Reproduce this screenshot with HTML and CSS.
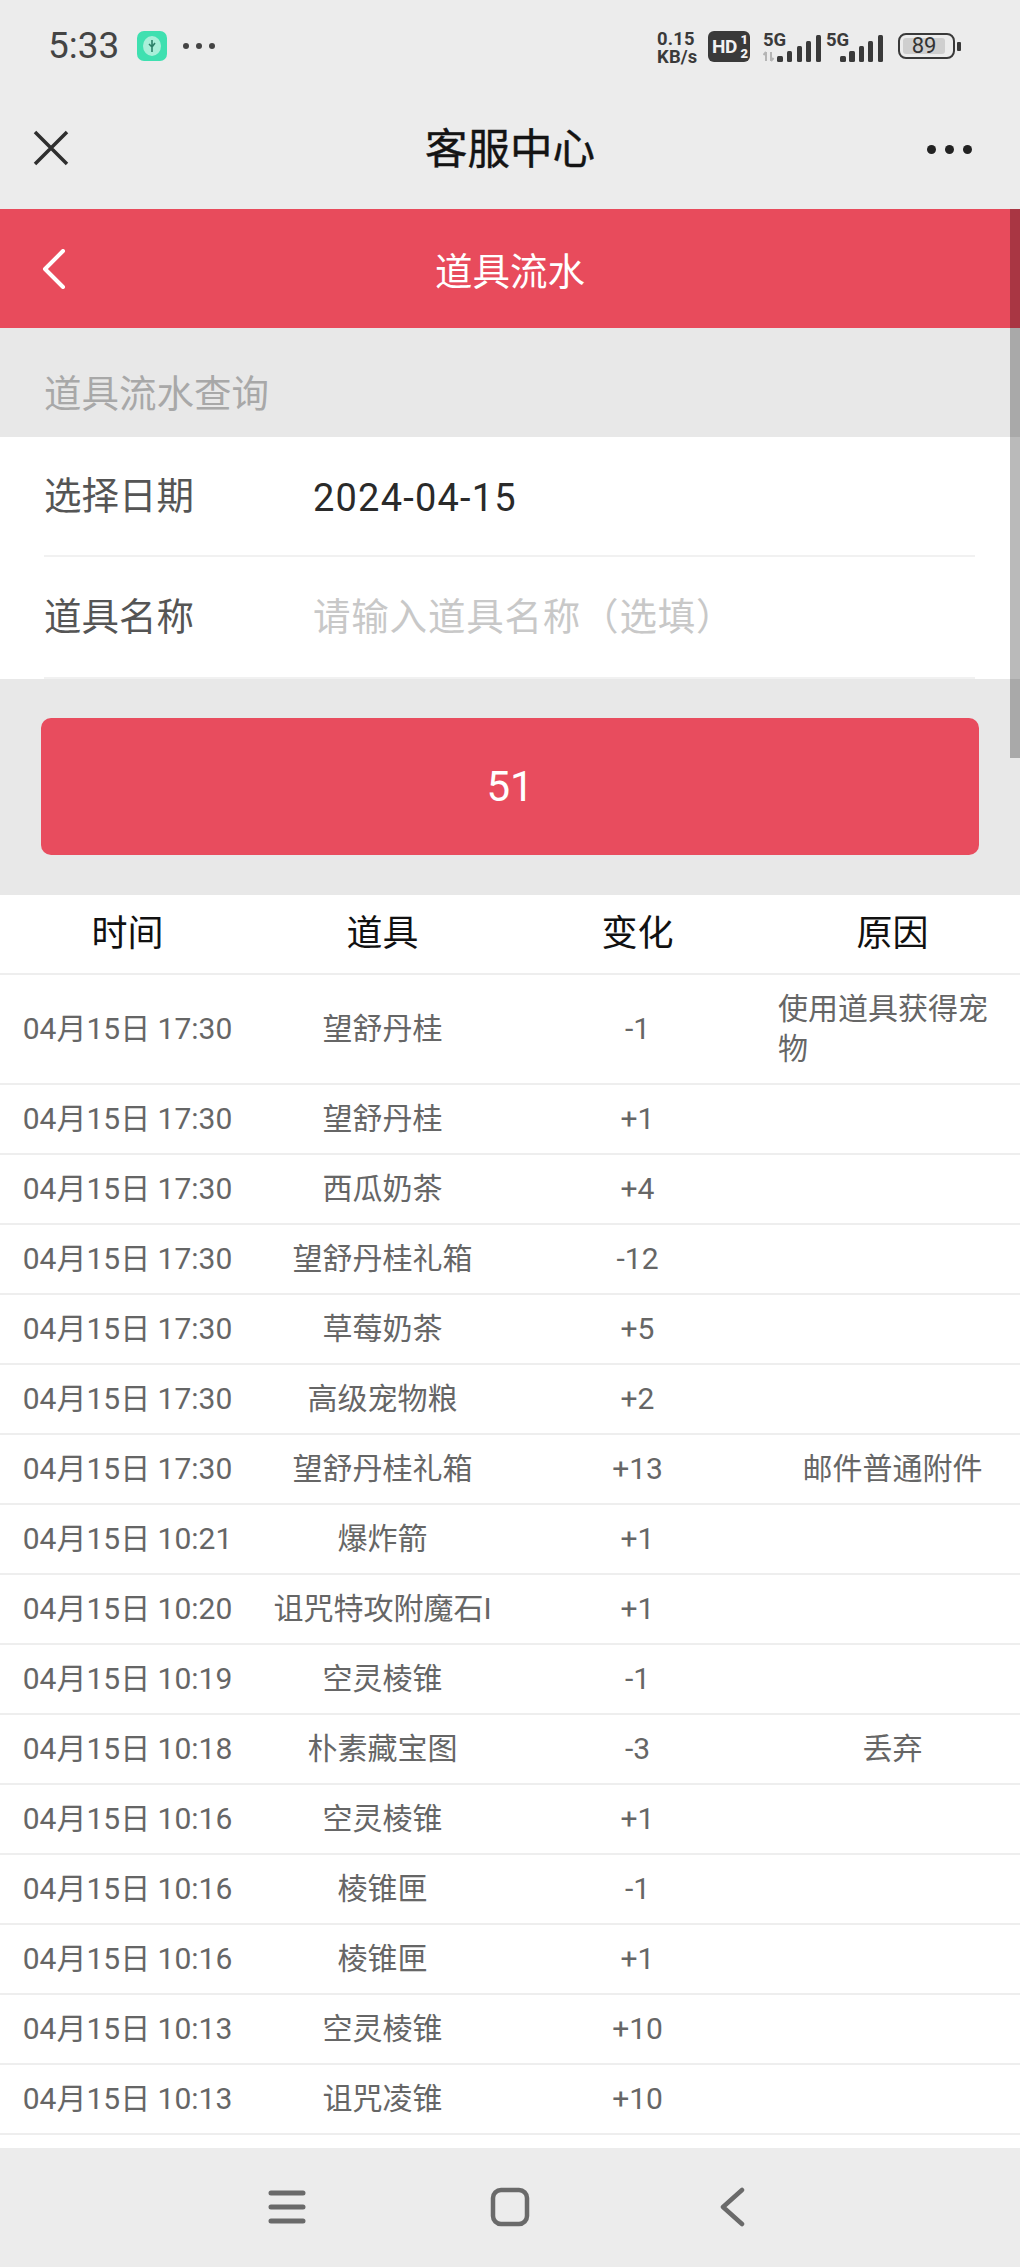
FILE: index.html
```html
<!DOCTYPE html>
<html lang="zh-CN">
<head>
    <meta charset="UTF-8">
    <meta name="viewport" content="width=device-width, initial-scale=1.0">
    <title>道具流水</title>
    <link rel="stylesheet" href="styles.css">
</head>
<body>
<div class="statusbar">
    <div class="status-left">
        <span class="clock">5:33</span>
        <span class="app-icon">
            <svg width="20" height="22" viewBox="0 0 20 22"><ellipse cx="10" cy="11" rx="9" ry="10" fill="#a9efd9"/><path d="M10 5v12M7 9l3 3M13 8l-3 4" stroke="#2c7f68" stroke-width="1.6" fill="none"/></svg>
        </span>
        <span class="more-dots"><i></i><i></i><i></i></span>
    </div>
    <div class="status-right">
        <div class="net"><span>0.15</span><span>KB/s</span></div>
        <div class="hd"><span class="hd-text">HD</span><span class="hd-sim"><b>1</b><b>2</b></span></div>
        <svg class="signal first" width="62" height="36" viewBox="0 -6 62 36">
            <text x="0" y="14" class="sig-text">5G</text>
            <path d="M3 20v9M0.5 23l2.5-3M8 29v-9M10.500 26l-2.500 3" stroke="#b5b5b5" stroke-width="2" fill="none"/>
            <rect x="14" y="24" width="6" height="6" rx="1.500"/><rect x="24" y="19" width="5" height="11" rx="1.500"/><rect x="34" y="14" width="5" height="16" rx="1.500"/><rect x="43" y="9" width="5" height="21" rx="1.500"/><rect x="53" y="3" width="5" height="27" rx="1.500"/>
        </svg>
        <svg class="signal" width="58" height="36" viewBox="0 -6 58 36">
            <text x="0" y="14" class="sig-text">5G</text>
            <rect x="14" y="24" width="6" height="6" rx="1.500"/><rect x="23" y="19" width="6" height="11" rx="1.500"/><rect x="33" y="14" width="5" height="16" rx="1.500"/><rect x="42" y="9" width="5" height="21" rx="1.500"/><rect x="52" y="3" width="5" height="27" rx="1.500"/>
        </svg>
        <div class="battery">
            <div class="battery-box"><span class="battery-level">89</span></div>
            <span class="battery-nub"></span>
        </div>
    </div>
</div>

<div class="titlebar">
    <svg class="close-icon" width="36" height="36" viewBox="0 0 36 36"><path d="M2 2l32 32M34 2L2 34" stroke="#2f2f2f" stroke-width="3.500" fill="none"/></svg>
    <div class="titlebar-name">客服中心</div>
    <div class="titlebar-more"><i></i><i></i><i></i></div>
</div>

<div class="main">
    <div class="page-head">
        <svg class="back-icon" width="24" height="40" viewBox="0 0 24 40"><path d="M21 2L3 20l18 18" stroke="#fff" stroke-width="4" fill="none" stroke-linecap="round" stroke-linejoin="round"/></svg>
        <div class="page-head-title">道具流水</div>
    </div>

    <div class="section-title">道具流水查询</div>
    <div class="form">
        <div class="form-row">
            <span class="form-label">选择日期</span>
            <span class="form-value">2024-04-15</span>
        </div>
        <div class="form-row">
            <span class="form-label">道具名称</span>
            <span class="form-placeholder">请输入道具名称（选填）</span>
        </div>
    </div>

    <div class="btn-wrap">
        <div class="btn">51</div>
    </div>

    <div class="table">
        <div class="row head">
            <div class="cell">时间</div><div class="cell">道具</div><div class="cell">变化</div><div class="cell">原因</div>
        </div>
        <div class="row">
            <div class="cell">04月15日 17:30</div><div class="cell">望舒丹桂</div><div class="cell">-1</div><div class="cell">使用道具获得宠物</div>
        </div>
        <div class="row">
            <div class="cell">04月15日 17:30</div><div class="cell">望舒丹桂</div><div class="cell">+1</div><div class="cell"></div>
        </div>
        <div class="row">
            <div class="cell">04月15日 17:30</div><div class="cell">西瓜奶茶</div><div class="cell">+4</div><div class="cell"></div>
        </div>
        <div class="row">
            <div class="cell">04月15日 17:30</div><div class="cell">望舒丹桂礼箱</div><div class="cell">-12</div><div class="cell"></div>
        </div>
        <div class="row">
            <div class="cell">04月15日 17:30</div><div class="cell">草莓奶茶</div><div class="cell">+5</div><div class="cell"></div>
        </div>
        <div class="row">
            <div class="cell">04月15日 17:30</div><div class="cell">高级宠物粮</div><div class="cell">+2</div><div class="cell"></div>
        </div>
        <div class="row">
            <div class="cell">04月15日 17:30</div><div class="cell">望舒丹桂礼箱</div><div class="cell">+13</div><div class="cell">邮件普通附件</div>
        </div>
        <div class="row">
            <div class="cell">04月15日 10:21</div><div class="cell">爆炸箭</div><div class="cell">+1</div><div class="cell"></div>
        </div>
        <div class="row">
            <div class="cell">04月15日 10:20</div><div class="cell">诅咒特攻附魔石I</div><div class="cell">+1</div><div class="cell"></div>
        </div>
        <div class="row">
            <div class="cell">04月15日 10:19</div><div class="cell">空灵棱锥</div><div class="cell">-1</div><div class="cell"></div>
        </div>
        <div class="row">
            <div class="cell">04月15日 10:18</div><div class="cell">朴素藏宝图</div><div class="cell">-3</div><div class="cell">丢弃</div>
        </div>
        <div class="row">
            <div class="cell">04月15日 10:16</div><div class="cell">空灵棱锥</div><div class="cell">+1</div><div class="cell"></div>
        </div>
        <div class="row">
            <div class="cell">04月15日 10:16</div><div class="cell">棱锥匣</div><div class="cell">-1</div><div class="cell"></div>
        </div>
        <div class="row">
            <div class="cell">04月15日 10:16</div><div class="cell">棱锥匣</div><div class="cell">+1</div><div class="cell"></div>
        </div>
        <div class="row">
            <div class="cell">04月15日 10:13</div><div class="cell">空灵棱锥</div><div class="cell">+10</div><div class="cell"></div>
        </div>
        <div class="row">
            <div class="cell">04月15日 10:13</div><div class="cell">诅咒凌锥</div><div class="cell">+10</div><div class="cell"></div>
        </div>
    </div>

    <div class="scroll-thumb"></div>
</div>

<div class="navbar">
    <svg width="40" height="40" viewBox="0 0 40 40"><path d="M4 6h32M4 20h32M4 34h32" stroke="#6a6a6a" stroke-width="5" stroke-linecap="round"/></svg>
    <svg width="40" height="40" viewBox="0 0 40 40"><rect x="3" y="3" width="34" height="34" rx="8" stroke="#6a6a6a" stroke-width="4.500" fill="none"/></svg>
    <svg width="40" height="40" viewBox="0 0 40 40"><path d="M29 3L10 20l19 17" stroke="#6a6a6a" stroke-width="4.500" fill="none" stroke-linecap="round" stroke-linejoin="round"/></svg>
</div>
</body>
</html>
```

FILE: styles.css
```css
* {
    box-sizing: border-box;
}
body {
    font-family: Roboto, 'Noto Sans CJK SC', sans-serif;
    margin: 0;
    height: 2267px;
    overflow: hidden;
    display: flex;
    flex-direction: column;
    background-color: #ececec;
    color: #666;
}

/* phone status bar */
.statusbar {
    height: 92px;
    padding: 30px 59px 0 48px;
    display: flex;
    justify-content: space-between;
    align-items: flex-start;
}
.status-left {
    display: flex;
    align-items: center;
    height: 32px;
}
.clock {
    font-size: 37px;
    line-height: 32px;
    color: #444;
}
.app-icon {
    width: 30px;
    height: 30px;
    margin-left: 18px;
    border-radius: 7px;
    background-color: #3fe0b0;
    display: flex;
    align-items: center;
    justify-content: center;
}
.more-dots {
    display: flex;
    gap: 7px;
    margin-left: 16px;
}
.more-dots i {
    width: 6px;
    height: 6px;
    border-radius: 50%;
    background-color: #444;
}
.status-right {
    display: flex;
    align-items: flex-start;
    color: #3a3a3a;
}
.net {
    width: 45px;
    display: flex;
    flex-direction: column;
    font-size: 18.400px;
    font-weight: 700;
    line-height: 18px;
    letter-spacing: 0.2px;
}
.hd {
    width: 42px;
    height: 31px;
    margin: 1px 0 0 6px;
    padding: 0 2px 0 4px;
    border-radius: 6px;
    background-color: #3a3a3a;
    color: #f2f2f2;
    display: flex;
    align-items: center;
    justify-content: space-between;
    font-weight: 700;
}
.hd-text {
    font-size: 19px;
    letter-spacing: -0.5px;
}
.hd-sim {
    display: flex;
    flex-direction: column;
    align-items: center;
    font-size: 13px;
    line-height: 14px;
}
.hd-sim b {
    display: block;
}
.signal {
    margin-top: -4px;
    fill: #3a3a3a;
}
.signal.first {
    margin-left: 13px;
}
.signal + .signal {
    margin-left: 1px;
}
.sig-text {
    font-size: 18.500px;
    font-weight: 700;
}
.battery {
    display: flex;
    align-items: center;
    margin: 3px 0 0 14px;
}
.battery-box {
    width: 57px;
    height: 26px;
    padding: 3px;
    border: 2.5px solid #3a3a3a;
    border-radius: 8px;
}
.battery-level {
    display: block;
    width: 42px;
    height: 100%;
    border-radius: 3px;
    background-color: #cfcfcf;
    color: #333;
    font-size: 22px;
    line-height: 16px;
    text-align: center;
}
.battery-nub {
    width: 4px;
    height: 9px;
    margin-left: 2px;
    border-radius: 1px;
    background-color: #3a3a3a;
}

/* miniprogram title bar */
.titlebar {
    height: 117px;
    padding: 0 33px;
    display: grid;
    grid-template-columns: 1fr auto 1fr;
    align-items: center;
}
.close-icon {
    margin-bottom: 5px;
}
.titlebar-name {
    font-size: 42.500px;
    color: #141414;
    margin-bottom: 11px;
    -webkit-text-stroke: 0.4px #141414;
}
.titlebar-more {
    display: flex;
    justify-content: flex-end;
    gap: 9px;
    margin: 0 15px 2px 0;
}
.titlebar-more i {
    width: 9px;
    height: 9px;
    border-radius: 50%;
    background-color: #222;
}

.main {
    position: relative;
    flex: 1;
    overflow: hidden;
    background-color: #fff;
}
.page-head {
    height: 119px;
    padding: 0 42px;
    background-color: #e84b5c;
    display: grid;
    grid-template-columns: 1fr auto 1fr;
    align-items: center;
}
.page-head-title {
    font-size: 37.500px;
    color: #fff;
}
.section-title {
    height: 109px;
    padding: 41px 0 0 44px;
    background-color: #e8e8e8;
    color: #a8a8a8;
    font-size: 37.500px;
    line-height: 50px;
}
.form {
    padding: 0 45px 0 44px;
    background-color: #fff;
}
.form-row {
    height: 120px;
    border-bottom: 2px solid #f1f1f1;
    display: flex;
    align-items: center;
    font-size: 37.500px;
}
.form-row + .form-row {
    height: 122px;
}
.form-label {
    width: 269px;
    margin-bottom: 7px;
    color: #555;
}
.form-value {
    margin-top: 3px;
    font-size: 38px;
    letter-spacing: 1.200px;
    color: #2a2a2a;
}
.form-placeholder {
    margin-bottom: 7px;
    letter-spacing: 0.8px;
    color: #c8c8c8;
}
.btn-wrap {
    padding: 39px 41px 40px;
    background-color: #e8e8e8;
}
.btn {
    height: 137px;
    border-radius: 10px;
    background-color: #e84c5e;
    color: #fff;
    font-size: 42px;
    display: flex;
    align-items: center;
    justify-content: center;
}

.row {
    display: grid;
    grid-template-columns: repeat(4, 1fr);
    border-bottom: 2px solid #eee;
    font-size: 30px;
    line-height: 40px;
}
.row.head {
    height: 80px;
    color: #111;
    font-size: 36px;
}
.cell {
    padding: 14px 13px;
    display: flex;
    align-items: center;
    justify-content: center;
    white-space: normal;
}
.row .cell:first-child {
    padding: 14px 0;
}
.row.head .cell {
    padding: 0;
}
.scroll-thumb {
    position: absolute;
    top: 0;
    right: 0;
    width: 10px;
    height: 549px;
    background-color: rgba(0, 0, 0, 0.27);
}

.navbar {
    height: 119px;
    padding-top: 39px;
    display: flex;
    justify-content: center;
    align-items: flex-start;
    gap: 183px;
    background-color: #ececec;
}
```
